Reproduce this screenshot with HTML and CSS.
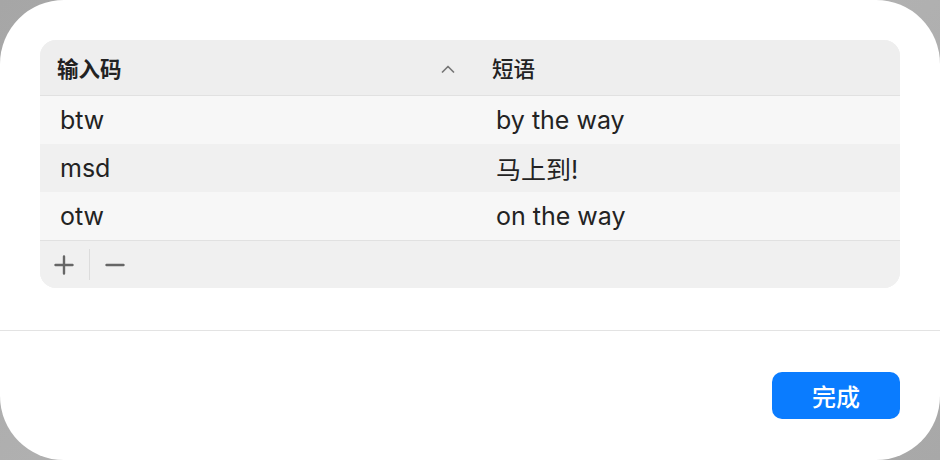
FILE: index.html
```html
<!DOCTYPE html>
<html lang="zh-CN">
<head>
<meta charset="utf-8">
<title>文本替换</title>
<link rel="stylesheet" href="styles.css">
</head>
<body>
<div class="window">
  <div class="content">
    <div class="table">
      <div class="thead">
        <div class="th th-sorted">
          <span>输入码</span>
          <svg class="chevron" width="14" height="8" viewBox="0 0 14 8"><path d="M1.5 7 L7 1.5 L12.5 7" fill="none" stroke="#777777" stroke-width="1.7" stroke-linecap="round" stroke-linejoin="round"/></svg>
        </div>
        <div class="th th-plain"><span>短语</span></div>
      </div>
      <div class="tbody">
        <div class="tr odd"><div class="td">btw</div><div class="td td2">by the way</div></div>
        <div class="tr even"><div class="td">msd</div><div class="td td2">马上到!</div></div>
        <div class="tr odd"><div class="td">otw</div><div class="td td2">on the way</div></div>
      </div>
      <div class="tfoot">
        <button class="tool" aria-label="添加">
          <svg width="20" height="20" viewBox="0 0 20 20"><path d="M10 1.5 V18.5 M1.5 10 H18.5" stroke="#666666" stroke-width="2.4" stroke-linecap="round"/></svg>
        </button>
        <span class="tool-sep"></span>
        <button class="tool" aria-label="移除">
          <svg width="20" height="20" viewBox="0 0 20 20"><path d="M1.5 10 H18.5" stroke="#666666" stroke-width="2.4" stroke-linecap="round"/></svg>
        </button>
      </div>
    </div>
  </div>
  <div class="divider"></div>
  <div class="actions">
    <button class="primary">完成</button>
  </div>
</div>
</body>
</html>
```

FILE: styles.css
```css
html, body {
  margin: 0;
  padding: 0;
}
body {
  width: 940px;
  height: 460px;
  background: linear-gradient(135deg, #a6a6a6 0%, #b4b4b4 50%, #a8a8a8 100%);
  font-family: "Inter", "Liberation Sans", "Noto Sans CJK SC", sans-serif;
  color: #262626;
  overflow: hidden;
}
.window {
  width: 940px;
  height: 460px;
  background: #ffffff;
  border-radius: 64px;
  box-sizing: border-box;
  display: flex;
  flex-direction: column;
}
.content {
  padding: 40px 40px 42px 40px;
}
.table {
  background: #f0f0f0;
  border-radius: 16px;
  overflow: hidden;
}
.thead {
  display: grid;
  grid-template-columns: 435px 1fr;
  height: 55px;
  background: #eeeeee;
  border-bottom: 1px solid #e1e1e1;
}
.th {
  display: flex;
  align-items: center;
  font-family: "Noto Sans CJK SC", sans-serif;
  font-size: 21.5px;
  color: #222;
}
.th-sorted {
  padding: 0 20px 0 17px;
  justify-content: space-between;
  font-weight: 700;
}
.th-plain {
  padding-left: 17px;
  font-weight: 500;
}
.chevron {
  display: block;
  margin-top: 2px;
}
.tr {
  display: grid;
  grid-template-columns: 435px 1fr;
  height: 48px;
  align-items: center;
}
.tr.odd { background: #f7f7f7; }
.tr.even { background: #f0f0f0; }
.td {
  padding-left: 20px;
  font-size: 25px;
  color: #232323;
}
.td2 {
  padding-left: 21px;
}
.tfoot {
  border-top: 1px solid #e1e1e1;
  height: 47px;
  display: flex;
  align-items: center;
  padding-left: 14px;
  background: #f0f0f0;
}
.tool {
  border: 0;
  background: transparent;
  padding: 0;
  width: 20px;
  height: 20px;
  display: flex;
}
.tool-sep {
  width: 1px;
  height: 31px;
  background: #dcdcdc;
  margin: 0 15px 0 15px;
}
.divider {
  height: 1px;
  background: #e3e3e3;
}
.actions {
  display: flex;
  justify-content: flex-end;
  padding: 41px 40px 0 0;
}
.primary {
  width: 128px;
  height: 47px;
  border: 0;
  border-radius: 10px;
  background: #0a7cff;
  color: #ffffff;
  font-family: "Noto Sans CJK SC", sans-serif;
  font-size: 24px;
  font-weight: 500;
  padding: 0;
}
```
